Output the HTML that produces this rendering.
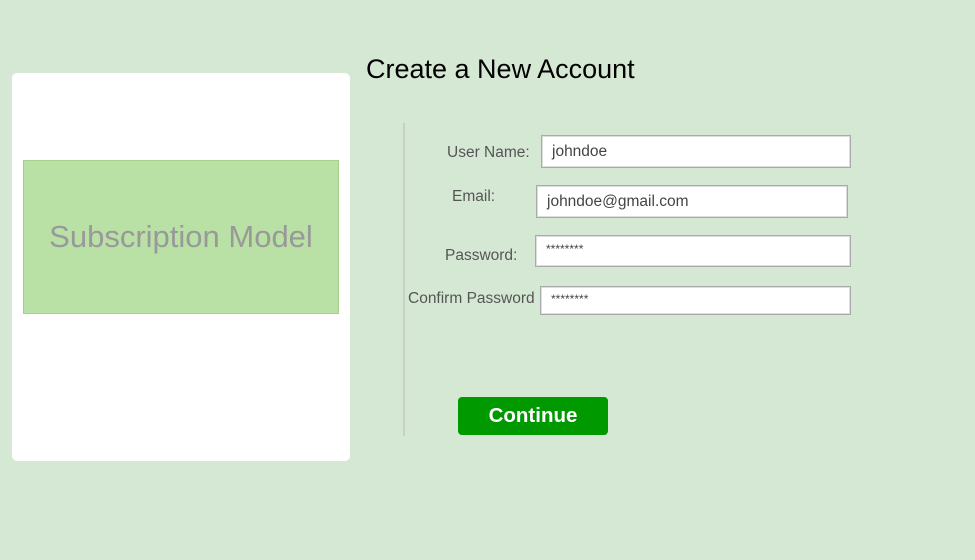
<!DOCTYPE html>
<html><head><style>
body{margin:0;width:975px;height:560px;background:#d5e8d4;position:relative;font-family:"Liberation Sans",Helvetica,Arial,sans-serif;overflow:hidden}
.a{position:absolute}
.card{left:12px;top:73px;width:338px;height:388px;background:#fff;border-radius:5px}
.sub{left:23px;top:160px;width:316px;height:154px;background:#b9e0a5;border:1px solid #a8d08d;color:#999;font-size:31px;display:flex;align-items:center;justify-content:center;padding-left:0;box-sizing:border-box}
.t{left:366px;top:54px;font-size:27px;color:#000}
.line{left:403px;top:123px;width:2px;height:313px;background:#c8cfc6}
.l{font-size:15.5px;color:#555}
.f{background:#fff;border:1px solid #aaa;box-shadow:inset 0 0 0 1px #ddd;box-sizing:border-box;font-size:15.5px;color:#444;padding-left:10px;display:flex;align-items:center}
.btn{left:458px;top:397px;width:150px;height:38px;background:#009a00;border-radius:4px;color:#fff;font-weight:bold;font-size:20.5px;display:flex;align-items:center;justify-content:center}
</style></head><body>
<div class="a card"></div>
<div class="a sub">Subscription Model</div>
<div class="a t">Create a New Account</div>
<div class="a line"></div>
<div class="a l" style="left:447px;top:144px">User Name:</div>
<div class="a f" style="left:541px;top:135px;width:310px;height:33px">johndoe</div>
<div class="a l" style="left:452px;top:188px">Email:</div>
<div class="a f" style="left:536px;top:185px;width:312px;height:33px">johndoe@gmail.com</div>
<div class="a l" style="left:445px;top:247px">Password:</div>
<div class="a f" style="left:535px;top:235px;width:316px;height:32px;align-items:flex-start;padding-top:6px;font-size:12px">********</div>
<div class="a l" style="left:408px;top:290px">Confirm Password</div>
<div class="a f" style="left:540px;top:286px;width:311px;height:29px;align-items:flex-start;padding-top:5px;font-size:12px">********</div>
<div class="a btn">Continue</div>
</body></html>
